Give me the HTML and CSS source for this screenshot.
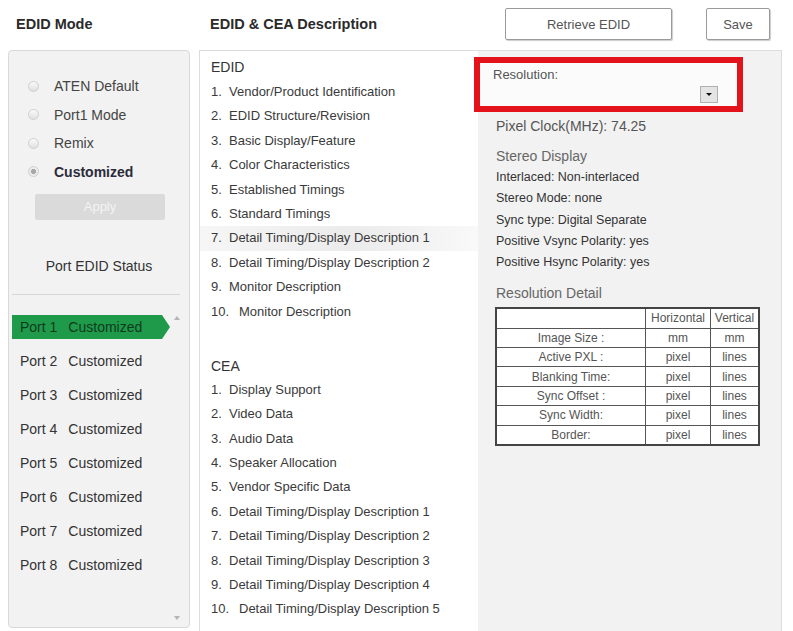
FILE: index.html
```html
<!DOCTYPE html>
<html lang="en">
<head>
    <meta charset="UTF-8">
    <meta name="viewport" content="width=device-width, initial-scale=1.0">
    <title>EDID Mode</title>
    <link rel="stylesheet" href="styles.css">
</head>
<body>
    <!-- Top bar -->
    <div class="top">
        <div class="title mode-title">EDID Mode</div>
        <div class="title desc-title">EDID &amp; CEA Description</div>
        <div class="buttons">
            <button class="btn retrieve">Retrieve EDID</button>
            <button class="btn save">Save</button>
        </div>
    </div>

    <div class="main">
        <!-- Left: mode + port status -->
        <div class="left">
            <div class="modes">
                <div class="radio"><span class="dot"></span>ATEN Default</div>
                <div class="radio"><span class="dot"></span>Port1 Mode</div>
                <div class="radio"><span class="dot"></span>Remix</div>
                <div class="radio checked"><span class="dot"></span>Customized</div>
            </div>
            <div class="apply">Apply</div>
            <div class="status-title">Port EDID Status</div>
            <div class="sep"></div>
            <div class="ports">
                <div class="port active"><span>Port 1</span><span class="state">Customized</span></div>
                <div class="port"><span>Port 2</span><span class="state">Customized</span></div>
                <div class="port"><span>Port 3</span><span class="state">Customized</span></div>
                <div class="port"><span>Port 4</span><span class="state">Customized</span></div>
                <div class="port"><span>Port 5</span><span class="state">Customized</span></div>
                <div class="port"><span>Port 6</span><span class="state">Customized</span></div>
                <div class="port"><span>Port 7</span><span class="state">Customized</span></div>
                <div class="port"><span>Port 8</span><span class="state">Customized</span></div>
            </div>
            <span class="scroll up"></span>
            <span class="scroll down"></span>
        </div>

        <!-- Right: descriptions -->
        <div class="content">
            <div class="list">
                <div class="group">EDID</div>
                <div class="item"><span class="num">1.</span>Vendor/Product Identification</div>
                <div class="item"><span class="num">2.</span>EDID Structure/Revision</div>
                <div class="item"><span class="num">3.</span>Basic Display/Feature</div>
                <div class="item"><span class="num">4.</span>Color Characteristics</div>
                <div class="item"><span class="num">5.</span>Established Timings</div>
                <div class="item"><span class="num">6.</span>Standard Timings</div>
                <div class="item selected"><span class="num">7.</span>Detail Timing/Display Description 1</div>
                <div class="item"><span class="num">8.</span>Detail Timing/Display Description 2</div>
                <div class="item"><span class="num">9.</span>Monitor Description</div>
                <div class="item"><span class="num wide">10.</span>Monitor Description</div>

                <div class="group cea">CEA</div>
                <div class="item"><span class="num">1.</span>Display Support</div>
                <div class="item"><span class="num">2.</span>Video Data</div>
                <div class="item"><span class="num">3.</span>Audio Data</div>
                <div class="item"><span class="num">4.</span>Speaker Allocation</div>
                <div class="item"><span class="num">5.</span>Vendor Specific Data</div>
                <div class="item"><span class="num">6.</span>Detail Timing/Display Description 1</div>
                <div class="item"><span class="num">7.</span>Detail Timing/Display Description 2</div>
                <div class="item"><span class="num">8.</span>Detail Timing/Display Description 3</div>
                <div class="item"><span class="num">9.</span>Detail Timing/Display Description 4</div>
                <div class="item"><span class="num wide">10.</span>Detail Timing/Display Description 5</div>
            </div>

            <div class="detail">
                <div class="res">
                    <div class="res-label">Resolution:</div>
                    <div class="res-select"><span class="drop"></span></div>
                </div>
                <div class="clock">Pixel Clock(MHz): 74.25</div>
                <div class="sub-title">Stereo Display</div>
                <div class="info">Interlaced: Non-interlaced</div>
                <div class="info">Stereo Mode: none</div>
                <div class="info">Sync type: Digital Separate</div>
                <div class="info">Positive Vsync Polarity: yes</div>
                <div class="info">Positive Hsync Polarity: yes</div>
                <div class="sub-title res-detail">Resolution Detail</div>
                <table class="res-table">
                    <tr><td></td><td>Horizontal</td><td>Vertical</td></tr>
                    <tr><td>Image Size :</td><td>mm</td><td>mm</td></tr>
                    <tr><td>Active PXL :</td><td>pixel</td><td>lines</td></tr>
                    <tr><td>Blanking Time:</td><td>pixel</td><td>lines</td></tr>
                    <tr><td>Sync Offset :</td><td>pixel</td><td>lines</td></tr>
                    <tr><td>Sync Width:</td><td>pixel</td><td>lines</td></tr>
                    <tr><td>Border:</td><td>pixel</td><td>lines</td></tr>
                </table>
            </div>
        </div>
    </div>
</body>
</html>
```

FILE: styles.css
```css
body {
    margin: 0;
    width: 793px;
    height: 631px;
    overflow: hidden;
    background: #fff;
    color: #333;
    font-family: "Liberation Sans", Arial, sans-serif;
}

/* top bar */
.top {
    display: flex;
    align-items: center;
    height: 48px;
}
.title {
    font-size: 14.5px;
    font-weight: bold;
    color: #2a2a2a;
}
.mode-title {
    width: 194px;
    padding-left: 16px;
}
.desc-title {
    flex: 1;
}
.buttons {
    display: flex;
    gap: 34px;
    margin-right: 23px;
}
.btn {
    height: 32px;
    border: 1px solid #9a9a9a;
    border-radius: 2px;
    background: #fff;
    color: #555;
    font-family: "Liberation Sans", Arial, sans-serif;
    font-size: 13px;
    box-shadow: 1px 1px 1px #ccc;
}
.retrieve {
    width: 167px;
}
.save {
    width: 64px;
}

.main {
    display: flex;
    padding: 2px 0 0 8px;
}

/* left panel */
.left {
    position: relative;
    width: 180px;
    height: 576px;
    border: 1px solid #d9d9d9;
    border-radius: 4px;
    background: #f2f2f2;
}
.modes {
    padding-top: 21px;
}
.radio {
    display: flex;
    align-items: center;
    height: 28.5px;
    padding-left: 19px;
    font-size: 14px;
    color: #444;
}
.dot {
    width: 9px;
    height: 9px;
    margin-right: 15px;
    border: 1px solid #cfcfcf;
    border-radius: 50%;
    background: linear-gradient(#fafafa, #e0e0e0);
}
.radio.checked {
    font-weight: bold;
    color: #2b2b3a;
}
.radio.checked .dot {
    background: radial-gradient(circle, #a8a8a8 35%, #ececec 45%);
}
.apply {
    width: 130px;
    height: 26px;
    margin: 8px 0 0 26px;
    border-radius: 2px;
    background: #dadada;
    color: #f3f3f3;
    font-size: 13px;
    line-height: 26px;
    text-align: center;
}
.status-title {
    margin-top: 37px;
    font-size: 14px;
    line-height: 18px;
    text-align: center;
    color: #333;
}
.sep {
    height: 1px;
    margin: 19px 9px 0 3px;
    background: #d6d6d6;
}
.ports {
    padding-top: 20px;
}
.port {
    width: 150px;
    height: 24px;
    margin: 0 0 10px 3px;
    padding-left: 8px;
    font-size: 14px;
    line-height: 24px;
    color: #333;
}
.port .state {
    margin-left: 11px;
}
.port.active {
    background: #1f9a4a;
    color: #0e3b1c;
    clip-path: polygon(0 0, calc(100% - 8px) 0, 100% 50%, calc(100% - 8px) 100%, 0 100%);
}
.scroll {
    position: absolute;
    right: 9px;
    width: 0;
    height: 0;
    border-left: 3px solid transparent;
    border-right: 3px solid transparent;
}
.scroll.up {
    top: 265px;
    border-bottom: 4px solid #b5b5b5;
}
.scroll.down {
    top: 565px;
    border-top: 4px solid #b5b5b5;
}

/* content */
.content {
    display: flex;
    width: 581px;
    height: 590px;
    margin-left: 9px;
    border: 1px solid #dcdcdc;
    border-bottom: none;
}
.list {
    width: 267px;
    padding: 7px 0 0 11px;
    background: #fff;
}
.group {
    font-size: 14px;
    line-height: 18px;
    color: #333;
    margin-bottom: 4px;
}
.group.cea {
    margin-top: 33px;
    margin-bottom: 3px;
}
.item {
    height: 24.4px;
    margin-left: -11px;
    padding-left: 11px;
    font-size: 13px;
    line-height: 24.4px;
    color: #3a3a3a;
}
.item.selected {
    background: linear-gradient(to right, #f6f6f6, #ebebeb 55%, #f9f9f9);
}
.num {
    display: inline-block;
    width: 18px;
}
.num.wide {
    width: 28px;
}

/* detail panel */
.detail {
    flex: 1;
    height: 575px;
    padding: 6px 0 0 18px;
    background: #f2f2f2;
}
.res {
    width: 257px;
    height: 43px;
    margin-left: -22px;
    border: 6px solid #e3121b;
    background: #fbfbfb;
}
.res-label {
    padding: 5px 0 0 13px;
    font-size: 13px;
    line-height: 14px;
    color: #555;
}
.res-select {
    display: flex;
    justify-content: flex-end;
    margin: 4px 19px 0 0;
}
.drop {
    display: flex;
    align-items: center;
    justify-content: center;
    width: 16px;
    height: 15px;
    border: 1px solid #b0b0b0;
    background: #e4e4e4;
}
.drop::after {
    content: "";
    border-left: 3px solid transparent;
    border-right: 3px solid transparent;
    border-top: 3px solid #111;
}
.clock {
    margin-top: 5px;
    font-size: 14px;
    line-height: 18px;
    color: #555;
}
.sub-title {
    margin-top: 12px;
    font-size: 14px;
    line-height: 18px;
    color: #666;
}
.info {
    font-size: 12.5px;
    line-height: 21.25px;
    color: #333;
}
.sub-title + .info {
    margin-top: 2px;
}
.res-detail {
    margin-top: 11px;
}
.res-table {
    width: 265px;
    margin: 5px 0 0 -1px;
    border: 2px solid #444;
    border-collapse: collapse;
    background: #fff;
    font-size: 12px;
    color: #555;
}
.res-table td {
    height: 18.4px;
    padding: 0;
    border: 1px solid #555;
    text-align: center;
    line-height: 18px;
}
.res-table td:first-child {
    width: 148px;
}
.res-table td:nth-child(2) {
    width: 64px;
}
```
